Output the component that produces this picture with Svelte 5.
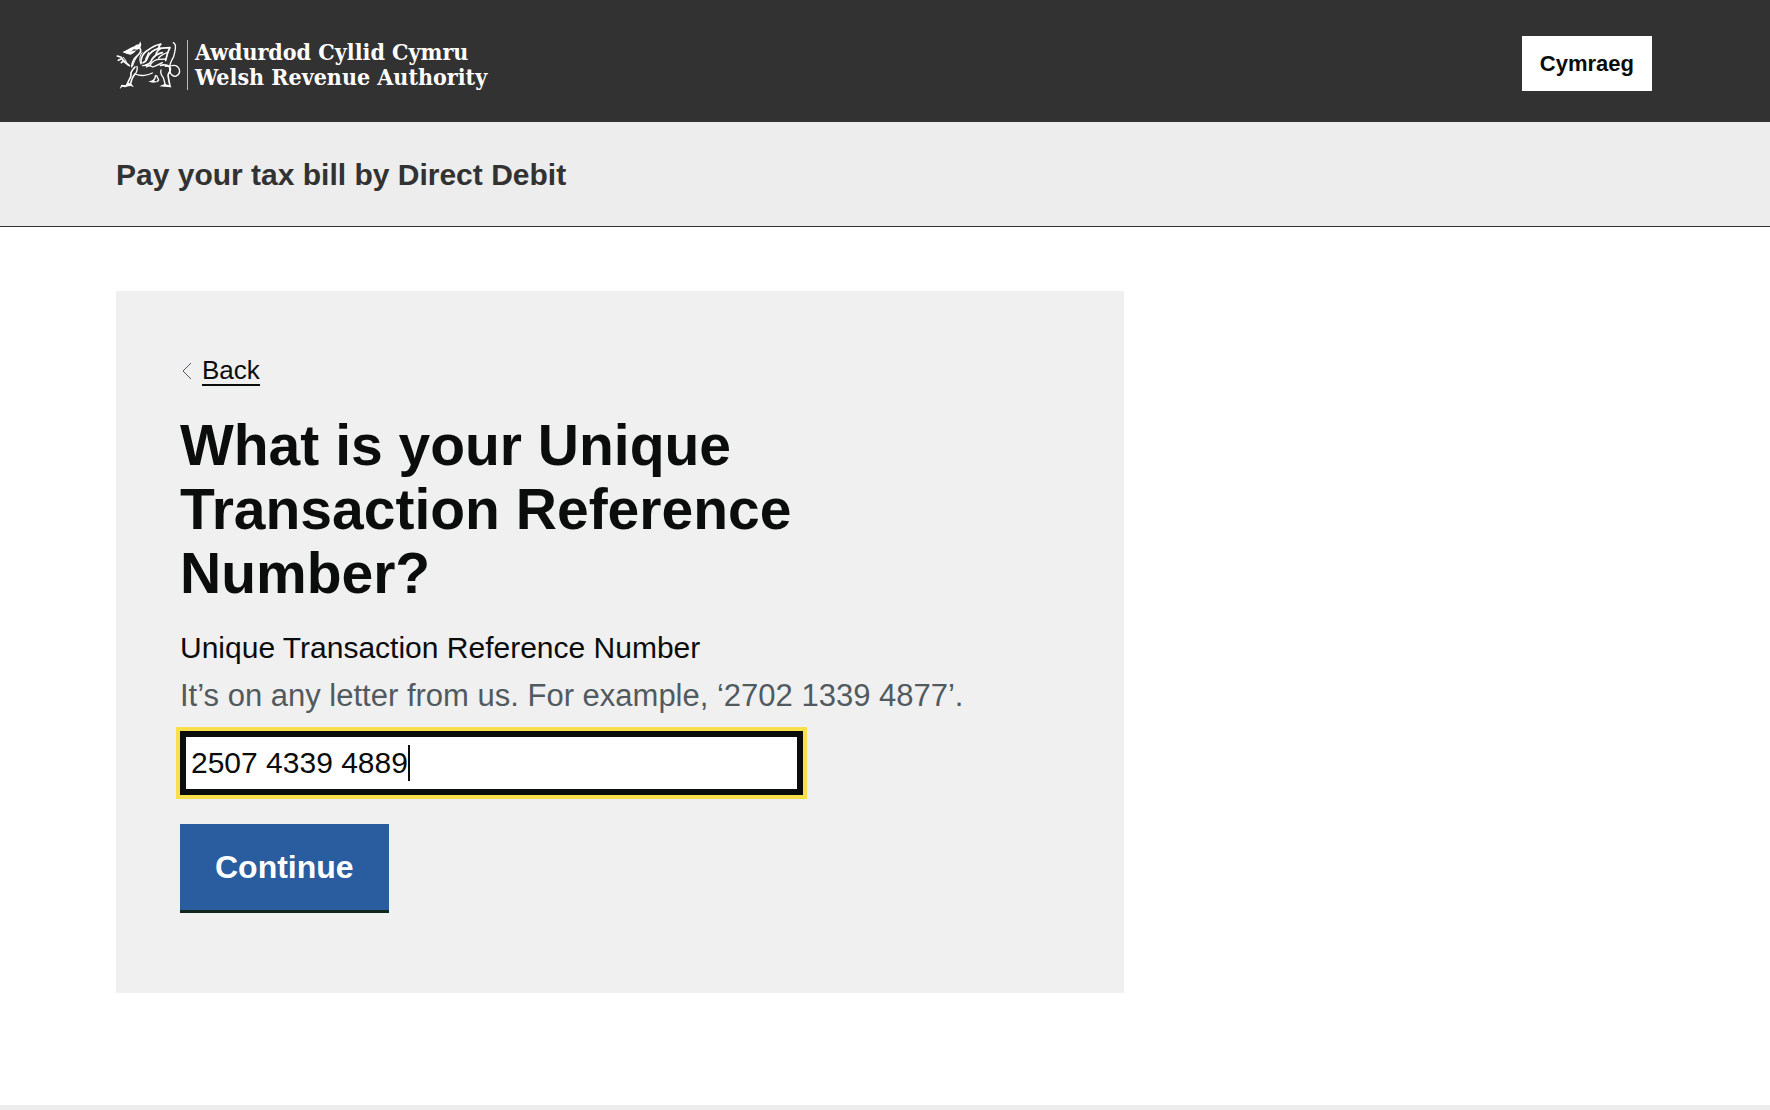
<script>
  import { onMount } from 'svelte';

  let reference = $state('2507 4339 4889');
  let focused = $state(false);
  let field;

  // Digits are 1ch wide in the body face and a space is half of that.
  let caretOffset = $derived(
    [...reference].reduce((total, char) => total + (char === ' ' ? 0.5 : 1), 0)
  );

  onMount(() => {
    field.focus();
    field.setSelectionRange(reference.length, reference.length);
    focused = true;
  });
</script>

<svelte:head>
  <title>Pay your tax bill by Direct Debit</title>
</svelte:head>

<div class="page">
  <header class="banner">
    <a class="brand" href="#home">
      <svg class="dragon" viewBox="30 24 198 162" aria-hidden="true">
        <g fill="#fff">
          <path d="M50 66l12-6 12-7 11-4 6-5 8-1 4-9 3 11-4 10-8 4-10-1-7 5-10 5-13 1z" />
          <path d="M55 66l11 0 14-3 12-2-9 8-9 5-14-3z" />
          <path d="M46 164l12 2 10-8 8 3 8 11-9-4-9 1-8 3-9-2-8 7z" />
          <path d="M160 169l15-7 12 3 11 7-12-1-12-1z" />
          <path d="M127 155l14-5 12 6-11 2z" />
        </g>
        <g fill="none" stroke="#fff" stroke-linecap="round" stroke-linejoin="round">
          <path stroke-width="5" d="M101 53q7 10-2 19t-13 13q-8 12-9 25 M34 78l12 4 7 12 14 11 M37 91l8-4 M46 98l7-6 17 15" />
          <path stroke-width="3" d="M108 68q-10 12-5 30 M94 78q-8 12-14 29 M52 82l9 12" />
          <path stroke-width="5" d="M87 111q-15 15-12 27l-13 27 M86 133q-8 10-12 27" />
          <path stroke-width="4" d="M93 109q3 16-8 25 M88 132q13 6 27 4t24-7" />
          <path stroke-width="5" d="M105 101q-2-27 20-40 19-15 40-19-6 6-8 13l35-2-7 15-6 23" />
          <path stroke-width="5" d="M111 98q11-4 14-17 11-20 32-25 M119 105q14-3 19-17 10-15 31-20" />
          <path stroke-width="4" d="M128 68l-9 20 M164 56q-11 5-15 18 M134 102q12-15 28-14l17-1 M186 67q-19 6-28 17 M110 107q18-4 31 4 13-5 28-13" />
          <path stroke-width="5" d="M163 106q12-3 20 0 14 6 9 18-8 9-5 18l5 27" />
          <path stroke-width="4" d="M165 120q-3 12 7 23l6 22 M148 137q1 10-8 16 M152 137l6 13-5 5 M134 104l-13 7" />
          <path stroke-width="4" d="M202 38q8 5 6 18t-5 24q-15 25-12 41 3 18 18 18 15-7 11-21-7-15-22-11l-20 2" />
        </g>
      </svg>
      <span class="rule"></span>
      <span class="brand-name">
        <span lang="cy">Awdurdod Cyllid Cymru</span>
        <span>Welsh Revenue Authority</span>
      </span>
    </a>
    <button class="language" type="button" lang="cy">Cymraeg</button>
  </header>

  <div class="service">Pay your tax bill by Direct Debit</div>

  <main>
    <section class="panel">
      <a class="back" href="#back">
        <svg viewBox="0 0 12 20" aria-hidden="true"><path d="M11 2 3 10l8 8" fill="none" stroke="#505a5f" stroke-width="1" /></svg>
        <span>Back</span>
      </a>
      <h1>What is your Unique Transaction Reference Number?</h1>
      <form onsubmit={(event) => event.preventDefault()}>
        <label for="utrn">Unique Transaction Reference Number</label>
        <p id="utrn-hint" class="hint">It’s on any letter from us. For example, ‘2702 1339 4877’.</p>
        <div class="field">
          <input
            id="utrn"
            type="text"
            inputmode="numeric"
            autocomplete="off"
            spellcheck="false"
            aria-describedby="utrn-hint"
            bind:value={reference}
            bind:this={field}
            onfocus={() => (focused = true)}
            onblur={() => (focused = false)}
          />
          {#if focused}
            <span class="caret" style="left: calc(11px + {caretOffset}ch)"></span>
          {/if}
        </div>
        <button class="continue" type="submit">Continue</button>
      </form>
    </section>
  </main>

  <footer></footer>
</div>

<style>
  :global(body) {
    margin: 0;
    background: #fff;
  }

  .page {
    display: flex;
    flex-direction: column;
    min-height: 100vh;
    color: #0b0c0c;
    font-family: "Liberation Sans", Arial, sans-serif;
    font-size: 30px;
    line-height: 40px;
  }

  .banner,
  .service,
  main {
    padding-left: 116px;
    padding-right: 118px;
  }

  .banner {
    display: flex;
    align-items: flex-start;
    justify-content: space-between;
    padding-top: 36px;
    padding-bottom: 30px;
    background: #323232;
  }

  .brand {
    display: flex;
    align-items: center;
    padding-top: 2px;
    color: #fff;
    text-decoration: none;
  }

  .dragon {
    width: 66px;
    height: 54px;
  }

  .rule {
    width: 1px;
    height: 50px;
    margin: 0 7px 0 5px;
    background: #bbb;
  }

  .brand-name {
    display: flex;
    flex-direction: column;
    padding-bottom: 2px;
    font-family: "DejaVu Serif Condensed", "DejaVu Serif", serif;
    font-size: 23px;
    font-weight: 700;
    line-height: 25px;
    white-space: nowrap;
  }

  .language {
    padding: 14px 18px;
    border: 0;
    background: #fff;
    color: #0b0c0c;
    font: 700 22px/27px "Liberation Sans", Arial, sans-serif;
    cursor: pointer;
  }

  .service {
    padding-top: 33px;
    padding-bottom: 31px;
    border-bottom: 1px solid #323232;
    background: #ededed;
    color: #323232;
    font-weight: 700;
  }

  main {
    padding-top: 64px;
    padding-bottom: 112px;
  }

  .panel {
    box-sizing: border-box;
    max-width: 1008px;
    padding: 65px 64px 80px;
    background: #f0f0f0;
  }

  .back {
    display: flex;
    align-items: center;
    gap: 10px;
    width: fit-content;
    color: #0b0c0c;
    font-size: 26px;
    line-height: 32px;
    text-decoration: none;
  }

  .back svg {
    width: 12px;
    height: 20px;
  }

  .back span {
    border-bottom: 2px solid;
    line-height: 28px;
  }

  h1 {
    max-width: 700px;
    margin: 27px 0 23px;
    font-size: 57px;
    font-weight: 700;
    line-height: 64px;
  }

  form {
    display: flex;
    flex-direction: column;
    align-items: flex-start;
  }

  .hint {
    margin: 8px 0 15px;
    color: #505a5f;
    font-size: 31px;
  }

  .field {
    position: relative;
    width: 100%;
    max-width: 623px;
  }

  input {
    display: block;
    box-sizing: border-box;
    width: 100%;
    height: 64px;
    padding: 0 5px;
    border: 6px solid #0b0c0c;
    border-radius: 0;
    outline: 4px solid #f9e04a;
    background: #fff;
    color: #0b0c0c;
    caret-color: transparent;
    font: inherit;
  }

  .caret {
    position: absolute;
    top: 14px;
    width: 2px;
    height: 36px;
    background: #0b0c0c;
    pointer-events: none;
  }

  .continue {
    margin-top: 29px;
    padding: 23px 35px;
    border: 0;
    border-bottom: 3px solid #11291d;
    background: #295da0;
    color: #fff;
    font: 700 32px/40px "Liberation Sans", Arial, sans-serif;
    cursor: pointer;
  }

  footer {
    flex: 1;
    background: #ededed;
  }
</style>
